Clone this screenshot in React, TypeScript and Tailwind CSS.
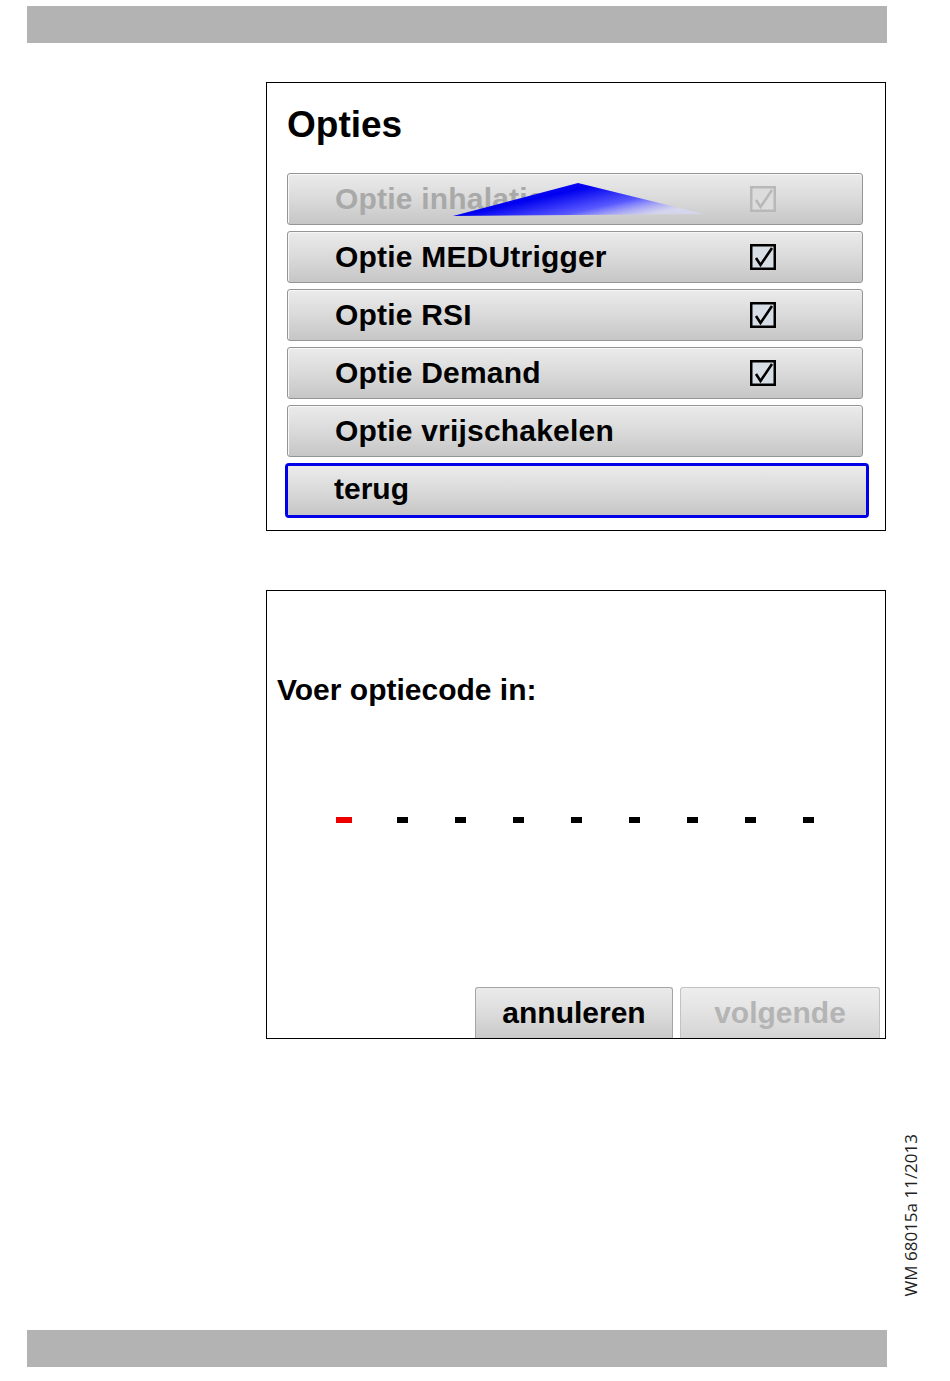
import React from "react";

const font = { fontFamily: '"Liberation Sans", Arial, sans-serif' };

function CheckBox({ disabled }: { disabled?: boolean }) {
  const c = disabled ? "#b8b8b8" : "#000";
  return (
    <svg width="26" height="26" viewBox="0 0 26 26">
      <rect x="1.25" y="1.25" width="23.5" height="23.5" fill={disabled ? "#dcdcdc" : "#d8dee6"} stroke={c} strokeWidth="2.5" />
      <path d="M6 14 L10.5 21 L22 4" fill="none" stroke={c} strokeWidth="2.6" strokeLinejoin="miter" />
    </svg>
  );
}

function OptionButton({
  label,
  checked,
  disabled,
  children,
}: {
  label: string;
  checked?: boolean;
  disabled?: boolean;
  children?: React.ReactNode;
}) {
  return (
    <div className="relative flex h-[52px] w-[576px] items-center rounded-[3px] border border-[#959595] bg-linear-to-b from-[#ebebeb] via-[#dadada] to-[#c6c6c6] shadow-[inset_1px_1px_0_#f7f7f7]">
      <span
        className={`ml-[47px] text-[30px] font-bold leading-none tracking-[0.2px] ${disabled ? "text-[#a9a9a9]" : "text-black"}`}
      >
        {label}
      </span>
      {checked !== undefined && (
        <span className="ml-auto mr-[86px] flex">
          <CheckBox disabled={disabled} />
        </span>
      )}
      {children}
    </div>
  );
}

export default function App() {
  const slots = [0, 1, 2, 3, 4, 5, 6, 7, 8];
  return (
    <div className="relative flex h-[1381px] w-[950px] flex-col bg-white" style={font}>
      <div className="ml-[27px] mt-[6px] h-[37px] w-[860px] bg-[#b3b3b3]" />

      {/* Panel 1 */}
      <div className="ml-[266px] mt-[39px] flex h-[449px] w-[620px] flex-col border border-black px-[20px] pt-[23px]">
        <div className="text-[37px] font-bold leading-none text-black">Opties</div>
        <div className="mt-[30px] flex flex-col gap-[6px]">
          <OptionButton label="Optie inhalatie" checked disabled>
            <svg className="absolute left-0 top-0" width="576" height="52" viewBox="0 0 576 52">
              <defs>
                <linearGradient id="tri" x1="0" y1="0" x2="1" y2="0.6">
                  <stop offset="0" stopColor="#2a2aff" />
                  <stop offset="0.45" stopColor="#0000f0" />
                  <stop offset="0.75" stopColor="#5a5aff" />
                  <stop offset="1" stopColor="#d8d8ff" stopOpacity="0.6" />
                </linearGradient>
              </defs>
              <polygon points="165,42 290,9 416,40" fill="url(#tri)" />
            </svg>
          </OptionButton>
          <OptionButton label="Optie MEDUtrigger" checked />
          <OptionButton label="Optie RSI" checked />
          <OptionButton label="Optie Demand" checked />
          <OptionButton label="Optie vrijschakelen" />
          <div className="-ml-[2px] w-[584px] rounded-[4px] border-[3px] border-[#0000e6]">
            <div className="flex h-[49px] items-center rounded-[2px] bg-linear-to-b from-[#ebebeb] via-[#dadada] to-[#c6c6c6] pb-[4px]">
              <span className="ml-[46px] text-[30px] font-bold leading-none text-black">terug</span>
            </div>
          </div>
        </div>
      </div>

      {/* Panel 2 */}
      <div className="ml-[266px] mt-[59px] flex h-[449px] w-[620px] flex-col border border-black pt-[84px]">
        <div className="pl-[10px] text-[30px] font-bold leading-none text-black">Voer optiecode in:</div>
        <div className="ml-[48px] mt-[112px] flex">
          {slots.map((i) => (
            <div key={i} className="flex w-[58px] justify-center">
              {i === 0 ? (
                <div className="h-[6px] w-[16px] bg-[#ee0000]" />
              ) : (
                <div className="h-[6px] w-[11px] bg-black" />
              )}
            </div>
          ))}
        </div>
        <div className="mt-auto flex justify-end gap-[7px] pr-[5px]">
          <div className="flex h-[51px] w-[198px] items-center justify-center rounded-t-[3px] border border-b-0 border-[#a5a5a5] bg-linear-to-b from-[#ebebeb] via-[#dcdcdc] to-[#c9c9c9]">
            <span className="text-[30px] font-bold leading-none text-black">annuleren</span>
          </div>
          <div className="flex h-[51px] w-[200px] items-center justify-center rounded-t-[3px] border border-b-0 border-[#c2c2c2] bg-linear-to-b from-[#eeeeee] via-[#e2e2e2] to-[#d4d4d4]">
            <span className="text-[30px] font-bold leading-none text-[#b4b4b4]">volgende</span>
          </div>
        </div>
      </div>

      <div className="ml-[900px] mt-[96px] flex h-[161px] w-[20px] items-center justify-center">
        <span
          className="rotate-180 whitespace-nowrap text-[17px] leading-none text-[#222] [writing-mode:vertical-rl]"
          style={{ fontFamily: '"Open Sans", "Noto Sans", sans-serif' }}
        >
          WM 68015a 11/2013
        </span>
      </div>

      <div className="ml-[27px] mt-[34px] h-[37px] w-[860px] bg-[#b3b3b3]" />
    </div>
  );
}
